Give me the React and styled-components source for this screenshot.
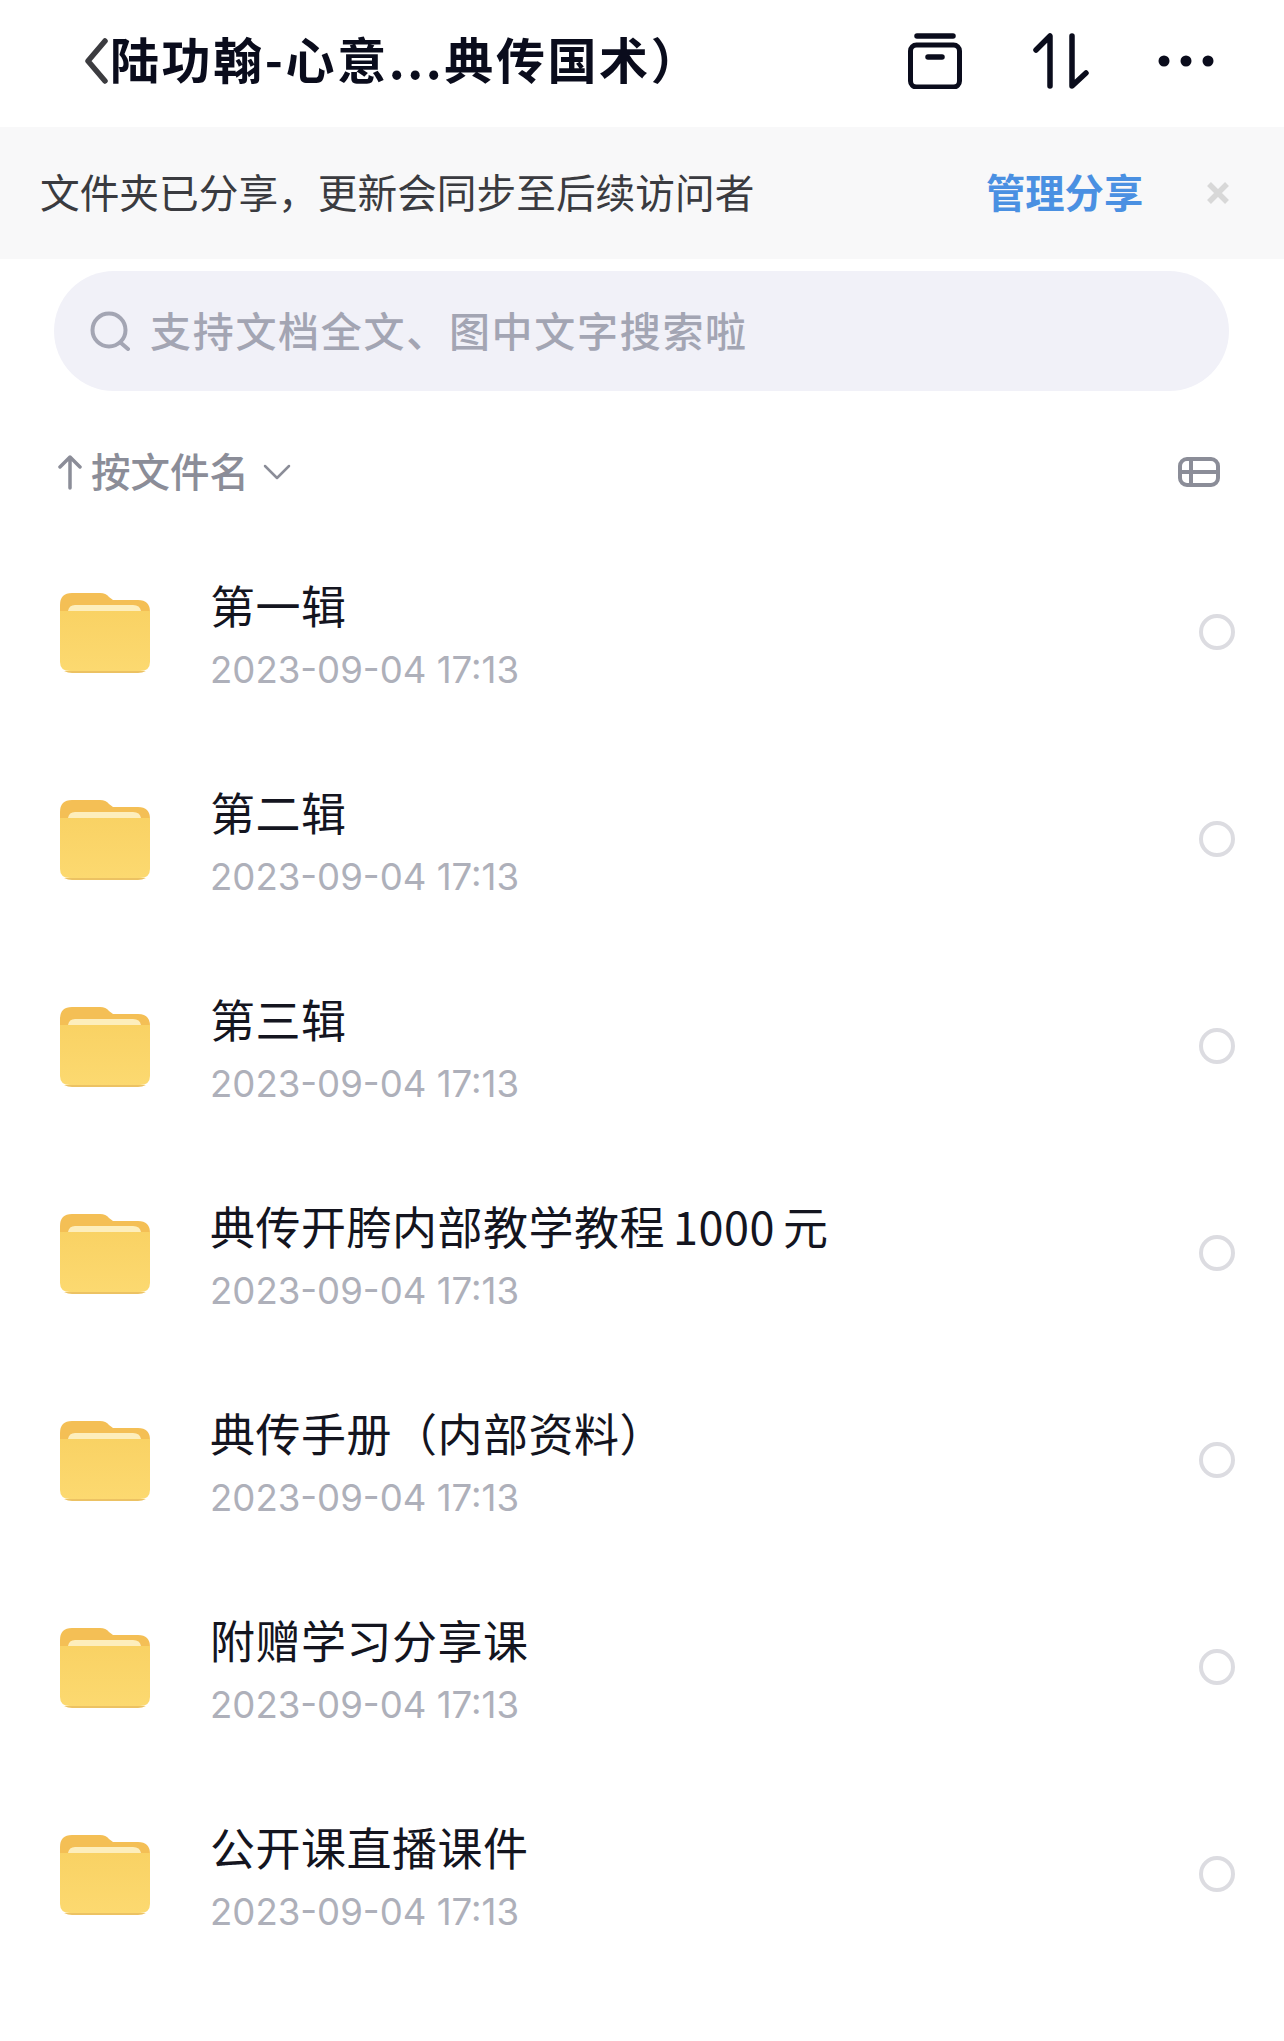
import React from 'react'
import styled, { createGlobalStyle } from 'styled-components'

const cjk = '"Noto Sans CJK SC", "Noto Sans", sans-serif'

const GlobalStyle = createGlobalStyle`
  html, body {
    margin: 0;
    padding: 0;
    background: #fff;
    font-family: ${cjk};
  }
`

const Page = styled.div`
  width: 1284px;
  height: 2041px;
  overflow: hidden;
  background: #fff;
`

const TopBar = styled.header`
  height: 127px;
  display: flex;
  align-items: center;
  padding: 0 0 6px 84px;
  box-sizing: border-box;
`

const BackIcon = styled.svg`
  width: 24px;
  height: 46px;
  flex: none;
`

const Title = styled.h1`
  margin: -6px 0 0 2px;
  width: 798px;
  flex: none;
  font-size: 49px;
  line-height: 60px;
  font-weight: 700;
  letter-spacing: 2.6px;
  color: #0a0c1c;
  white-space: nowrap;
`

const BarIcon = styled.svg`
  flex: none;
  display: block;
  margin-left: ${(p) => p.$gap}px;
`

const Banner = styled.div`
  height: 132px;
  display: flex;
  align-items: center;
  background: #f8f8f9;
  padding-left: 40px;
`

const BannerText = styled.span`
  width: 946px;
  flex: none;
  margin-top: -5px;
  font-size: 39.7px;
  line-height: 50px;
  color: #3a3b40;
  white-space: nowrap;
`

const ManageLink = styled.a`
  width: 220px;
  flex: none;
  margin-top: -5px;
  font-size: 39.3px;
  line-height: 50px;
  font-weight: 600;
  color: #4a90e2;
`

const SearchBox = styled.div`
  height: 120px;
  margin: 12px 55px 0 54px;
  border-radius: 60px;
  background: #f1f1f8;
  display: flex;
  align-items: center;
  padding-left: 36px;
`

const Placeholder = styled.span`
  margin: -5px 0 0 20px;
  font-size: 41px;
  letter-spacing: 1.7px;
  line-height: 50px;
  font-weight: 500;
  color: #a3a5b3;
  white-space: nowrap;
`

const SortRow = styled.div`
  height: 138px;
  box-sizing: border-box;
  padding: 24px 64px 0 58px;
  display: flex;
  align-items: center;
`

const SortLabel = styled.span`
  margin: -4px 0 0 9px;
  font-size: 39.5px;
  line-height: 50px;
  font-weight: 500;
  color: #8b8d98;
`

const Chevron = styled.svg`
  margin-left: 14px;
  flex: none;
`

const ViewIcon = styled.svg`
  margin-left: auto;
  flex: none;
`

const FileList = styled.ul`
  list-style: none;
  margin: 0;
  padding: 0;
`

const FileRow = styled.li`
  height: 207px;
  display: flex;
  align-items: center;
  padding-left: 60px;
`

const FolderIcon = styled.svg`
  width: 90px;
  height: 81px;
  flex: none;
`

const FileInfo = styled.div`
  margin-left: 60px;
  width: 989px;
  flex: none;
`

const FileName = styled.div`
  font-size: 45px;
  letter-spacing: 0.5px;
  line-height: 62px;
  margin-top: 1px;
  color: #14151f;
  white-space: nowrap;
`

const FileDate = styled.div`
  font-family: Inter, "Liberation Sans", sans-serif;
  font-size: 36.6px;
  line-height: 46px;
  margin-top: 11px;
  color: #aeb0ba;
  white-space: nowrap;
`

const Radio = styled.span`
  width: 36px;
  height: 36px;
  box-sizing: border-box;
  flex: none;
  margin-top: -2px;
  border-radius: 50%;
  border: 4px solid #dcdce1;
`

const files = [
  '第一辑',
  '第二辑',
  '第三辑',
  '典传开胯内部教学教程\u20061000\u2006元',
  '典传手册\uFF08内部资料\uFF09',
  '附赠学习分享课',
  '公开课直播课件',
]

const Folder = ({ id }) => (
  <FolderIcon viewBox='0 0 90 81'>
    <defs>
      <linearGradient id={id} x1='0' y1='0' x2='0' y2='1'>
        <stop offset='0' stopColor='#f9d264' />
        <stop offset='1' stopColor='#fcd970' />
      </linearGradient>
    </defs>
    <path
      d='M0 13 Q0 1 12 1 H40 Q46 1 49 5 L53 8 H78 Q90 8 90 20 V40 H0 Z'
      fill='#f4bf55'
    />
    <path d='M8 19 Q9 13 15 13 H73 Q80 13 81 19 Z' fill='#fdeebc' />
    <path
      d='M0 19 H90 V70 Q90 79 80 79 H10 Q0 79 0 70 Z'
      fill={`url(#${id})`}
    />
    <path d='M4 79 H86 Q82 81 78 81 H12 Q8 81 4 79 Z' fill='#ecc263' />
  </FolderIcon>
)

const App = () => {
  return (
    <Page>
      <GlobalStyle />
      <TopBar>
        <BackIcon viewBox='0 0 24 46' fill='none'>
          <path d='M21 3 L4 23 L21 43' stroke='#3c3c40' strokeWidth='5.5' strokeLinecap='round' strokeLinejoin='round' />
        </BackIcon>
        <Title>{'陆功翰-心意...典传国术\uFF09'}</Title>
        <BarIcon $gap={0} width='54' height='56' viewBox='0 0 54 56' fill='none' stroke='#0a0c1c' strokeWidth='5' strokeLinecap='round'>
          <path d='M9 3 H45' strokeWidth='5.5' />
          <rect x='2.5' y='12' width='49' height='42' rx='6' />
          <path d='M20 24 H34' strokeWidth='5.5' />
        </BarIcon>
        <BarIcon $gap={71} width='56' height='56' viewBox='0 0 56 56' fill='none' stroke='#0a0c1c' strokeWidth='5.5' strokeLinecap='round' strokeLinejoin='round'>
          <path d='M3 17 L17 3 V53' />
          <path d='M39 3 V53 L53 40' />
        </BarIcon>
        <BarIcon $gap={69} width='56' height='12' viewBox='0 0 56 12' fill='#0a0c1c'>
          <circle cx='6' cy='6' r='5.5' />
          <circle cx='28' cy='6' r='5.5' />
          <circle cx='50' cy='6' r='5.5' />
        </BarIcon>
      </TopBar>
      <Banner>
        <BannerText>{'文件夹已分享\uFF0C更新会同步至后续访问者'}</BannerText>
        <ManageLink>管理分享</ManageLink>
        <svg width='24' height='24' viewBox='0 0 24 24' stroke='#d8d8d8' strokeWidth='5.5'>
          <path d='M3 3 L21 21 M21 3 L3 21' />
        </svg>
      </Banner>
      <SearchBox>
        <svg width='40' height='40' viewBox='0 0 40 40' fill='none' stroke='#a3a5b3' strokeWidth='4' strokeLinecap='round'>
          <circle cx='19' cy='19' r='16.5' />
          <path d='M31 32 L38 38' />
        </svg>
        <Placeholder>支持文档全文、图中文字搜索啦</Placeholder>
      </SearchBox>
      <SortRow>
        <svg width='24' height='36' viewBox='0 0 24 36' fill='none' stroke='#8b8d98' strokeWidth='3.5' strokeLinecap='round' strokeLinejoin='round'>
          <path d='M12 3 V34 M2 13 L12 3 L22 13' />
        </svg>
        <SortLabel>按文件名</SortLabel>
        <Chevron width='28' height='16' viewBox='0 0 28 16' fill='none' stroke='#8b8d98' strokeWidth='2.5' strokeLinecap='round' strokeLinejoin='round'>
          <path d='M2 2 L14 14 L26 2' />
        </Chevron>
        <ViewIcon width='42' height='30' viewBox='0 0 42 30' fill='none' stroke='#8b8d98' strokeWidth='4'>
          <rect x='2' y='2' width='38' height='26' rx='7' />
          <path d='M2 15 H40 M13 2 V28' />
        </ViewIcon>
      </SortRow>
      <FileList>
        {files.map((name, i) => (
          <FileRow key={name}>
            <Folder id={`folder-${i}`} />
            <FileInfo>
              <FileName>{name}</FileName>
              <FileDate>2023-09-04 17:13</FileDate>
            </FileInfo>
            <Radio />
          </FileRow>
        ))}
      </FileList>
    </Page>
  )
}

export default App
